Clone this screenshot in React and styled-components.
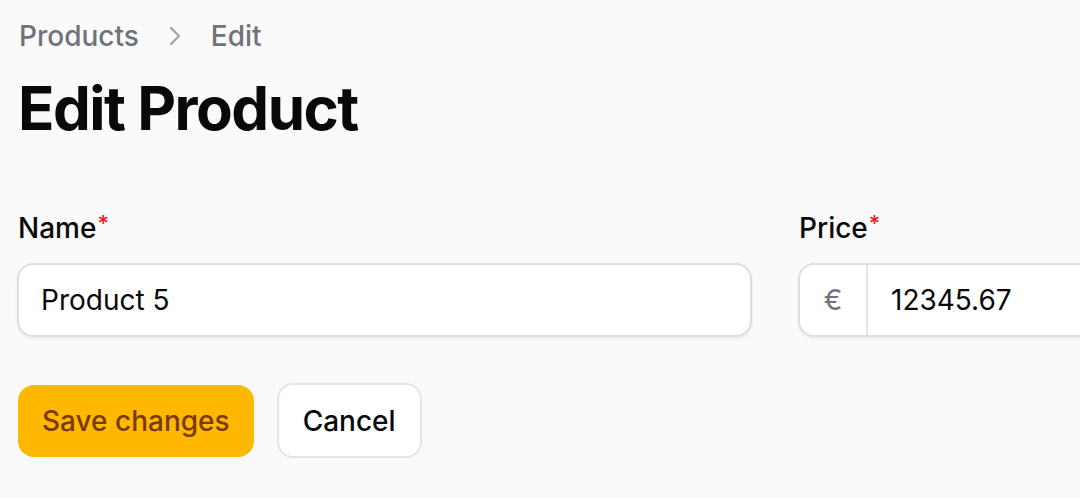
import React from "react";
import styled, { createGlobalStyle } from "styled-components";

const GlobalStyle = createGlobalStyle`
  html, body {
    margin: 0;
    padding: 0;
    background: #fafafa;
    overflow: hidden;
  }
  body {
    font-family: Inter, "Noto Sans", sans-serif;
    color: #09090b;
    -webkit-font-smoothing: antialiased;
  }
`;

const Page = styled.main`
  width: 1520px;
  padding: 16px 0 0 17px;
  display: flex;
  flex-direction: column;
`;

const Crumbs = styled.nav`
  display: flex;
  align-items: center;
  gap: 24px;
  height: 40px;
  font-size: 28px;
  font-weight: 500;
  color: #71717a;
  padding-left: 2px;
`;

const Chevron = styled.svg`
  width: 24px;
  height: 24px;
  color: #a1a1aa;
`;

const Title = styled.h1`
  margin: 16px 0 0 1px;
  font-size: 60px;
  line-height: 72px;
  font-weight: 700;
  letter-spacing: -1.5px;
`;

const Fields = styled.div`
  margin-top: 64px;
  display: grid;
  grid-template-columns: 735px 735px;
  column-gap: 46px;
`;

const Field = styled.div`
  display: flex;
  flex-direction: column;
  gap: 15px;
`;

const Label = styled.label`
  height: 40px;
  line-height: 40px;
  font-size: 28px;
  font-weight: 500;
  display: flex;
  align-items: center;
  padding-left: 1px;

  sup {
    color: #ef1c1c;
    font-size: 22px;
    line-height: 1;
    align-self: flex-start;
    margin-top: 4px;
    margin-left: 1px;
  }
`;

const InputBox = styled.div`
  height: 74px;
  box-sizing: border-box;
  border: 2px solid #dedede;
  border-radius: 16px;
  background: #fff;
  box-shadow: 0 2px 3px rgba(0, 0, 0, 0.06);
  display: flex;
  align-items: stretch;
  overflow: hidden;
`;

const Prefix = styled.span`
  width: 66px;
  flex: none;
  display: flex;
  align-items: center;
  justify-content: center;
  border-right: 2px solid #e4e4e7;
  color: #71717a;
  font-size: 28px;
`;

const Value = styled.span`
  display: flex;
  align-items: center;
  padding-left: ${(p) => (p.$prefixed ? "23px" : "22px")};
  font-size: 28px;
  color: #09090b;
`;

const Actions = styled.div`
  margin-top: 46px;
  display: flex;
  gap: 23px;
  align-items: center;
  padding-left: 1px;
`;

const Button = styled.button`
  height: ${(p) => (p.$primary ? "72px" : "75px")};
  box-sizing: border-box;
  padding: 0 24px;
  border-radius: 16px;
  border: ${(p) => (p.$primary ? "none" : "2px solid #e4e4e4")};
  background: ${(p) => (p.$primary ? "#ffb800" : "#ffffff")};
  color: ${(p) => (p.$primary ? "#7a3a06" : "#09090b")};
  font-family: Inter, "Noto Sans", sans-serif;
  font-size: 28px;
  font-weight: 500;
  cursor: pointer;
`;

export default function App() {
  return (
    <>
      <GlobalStyle />
      <Page>
        <Crumbs>
          <span>Products</span>
          <Chevron viewBox="0 0 24 24" fill="none" stroke="currentColor" strokeWidth="2.2" strokeLinecap="round" strokeLinejoin="round">
            <path d="M8 4l8 8-8 8" />
          </Chevron>
          <span>Edit</span>
        </Crumbs>
        <Title>Edit Product</Title>
        <Fields>
          <Field>
            <Label>
              Name<sup>*</sup>
            </Label>
            <InputBox>
              <Value>Product 5</Value>
            </InputBox>
          </Field>
          <Field>
            <Label>
              Price<sup>*</sup>
            </Label>
            <InputBox>
              <Prefix>€</Prefix>
              <Value $prefixed>12345.67</Value>
            </InputBox>
          </Field>
        </Fields>
        <Actions>
          <Button $primary>Save changes</Button>
          <Button>Cancel</Button>
        </Actions>
      </Page>
    </>
  );
}
